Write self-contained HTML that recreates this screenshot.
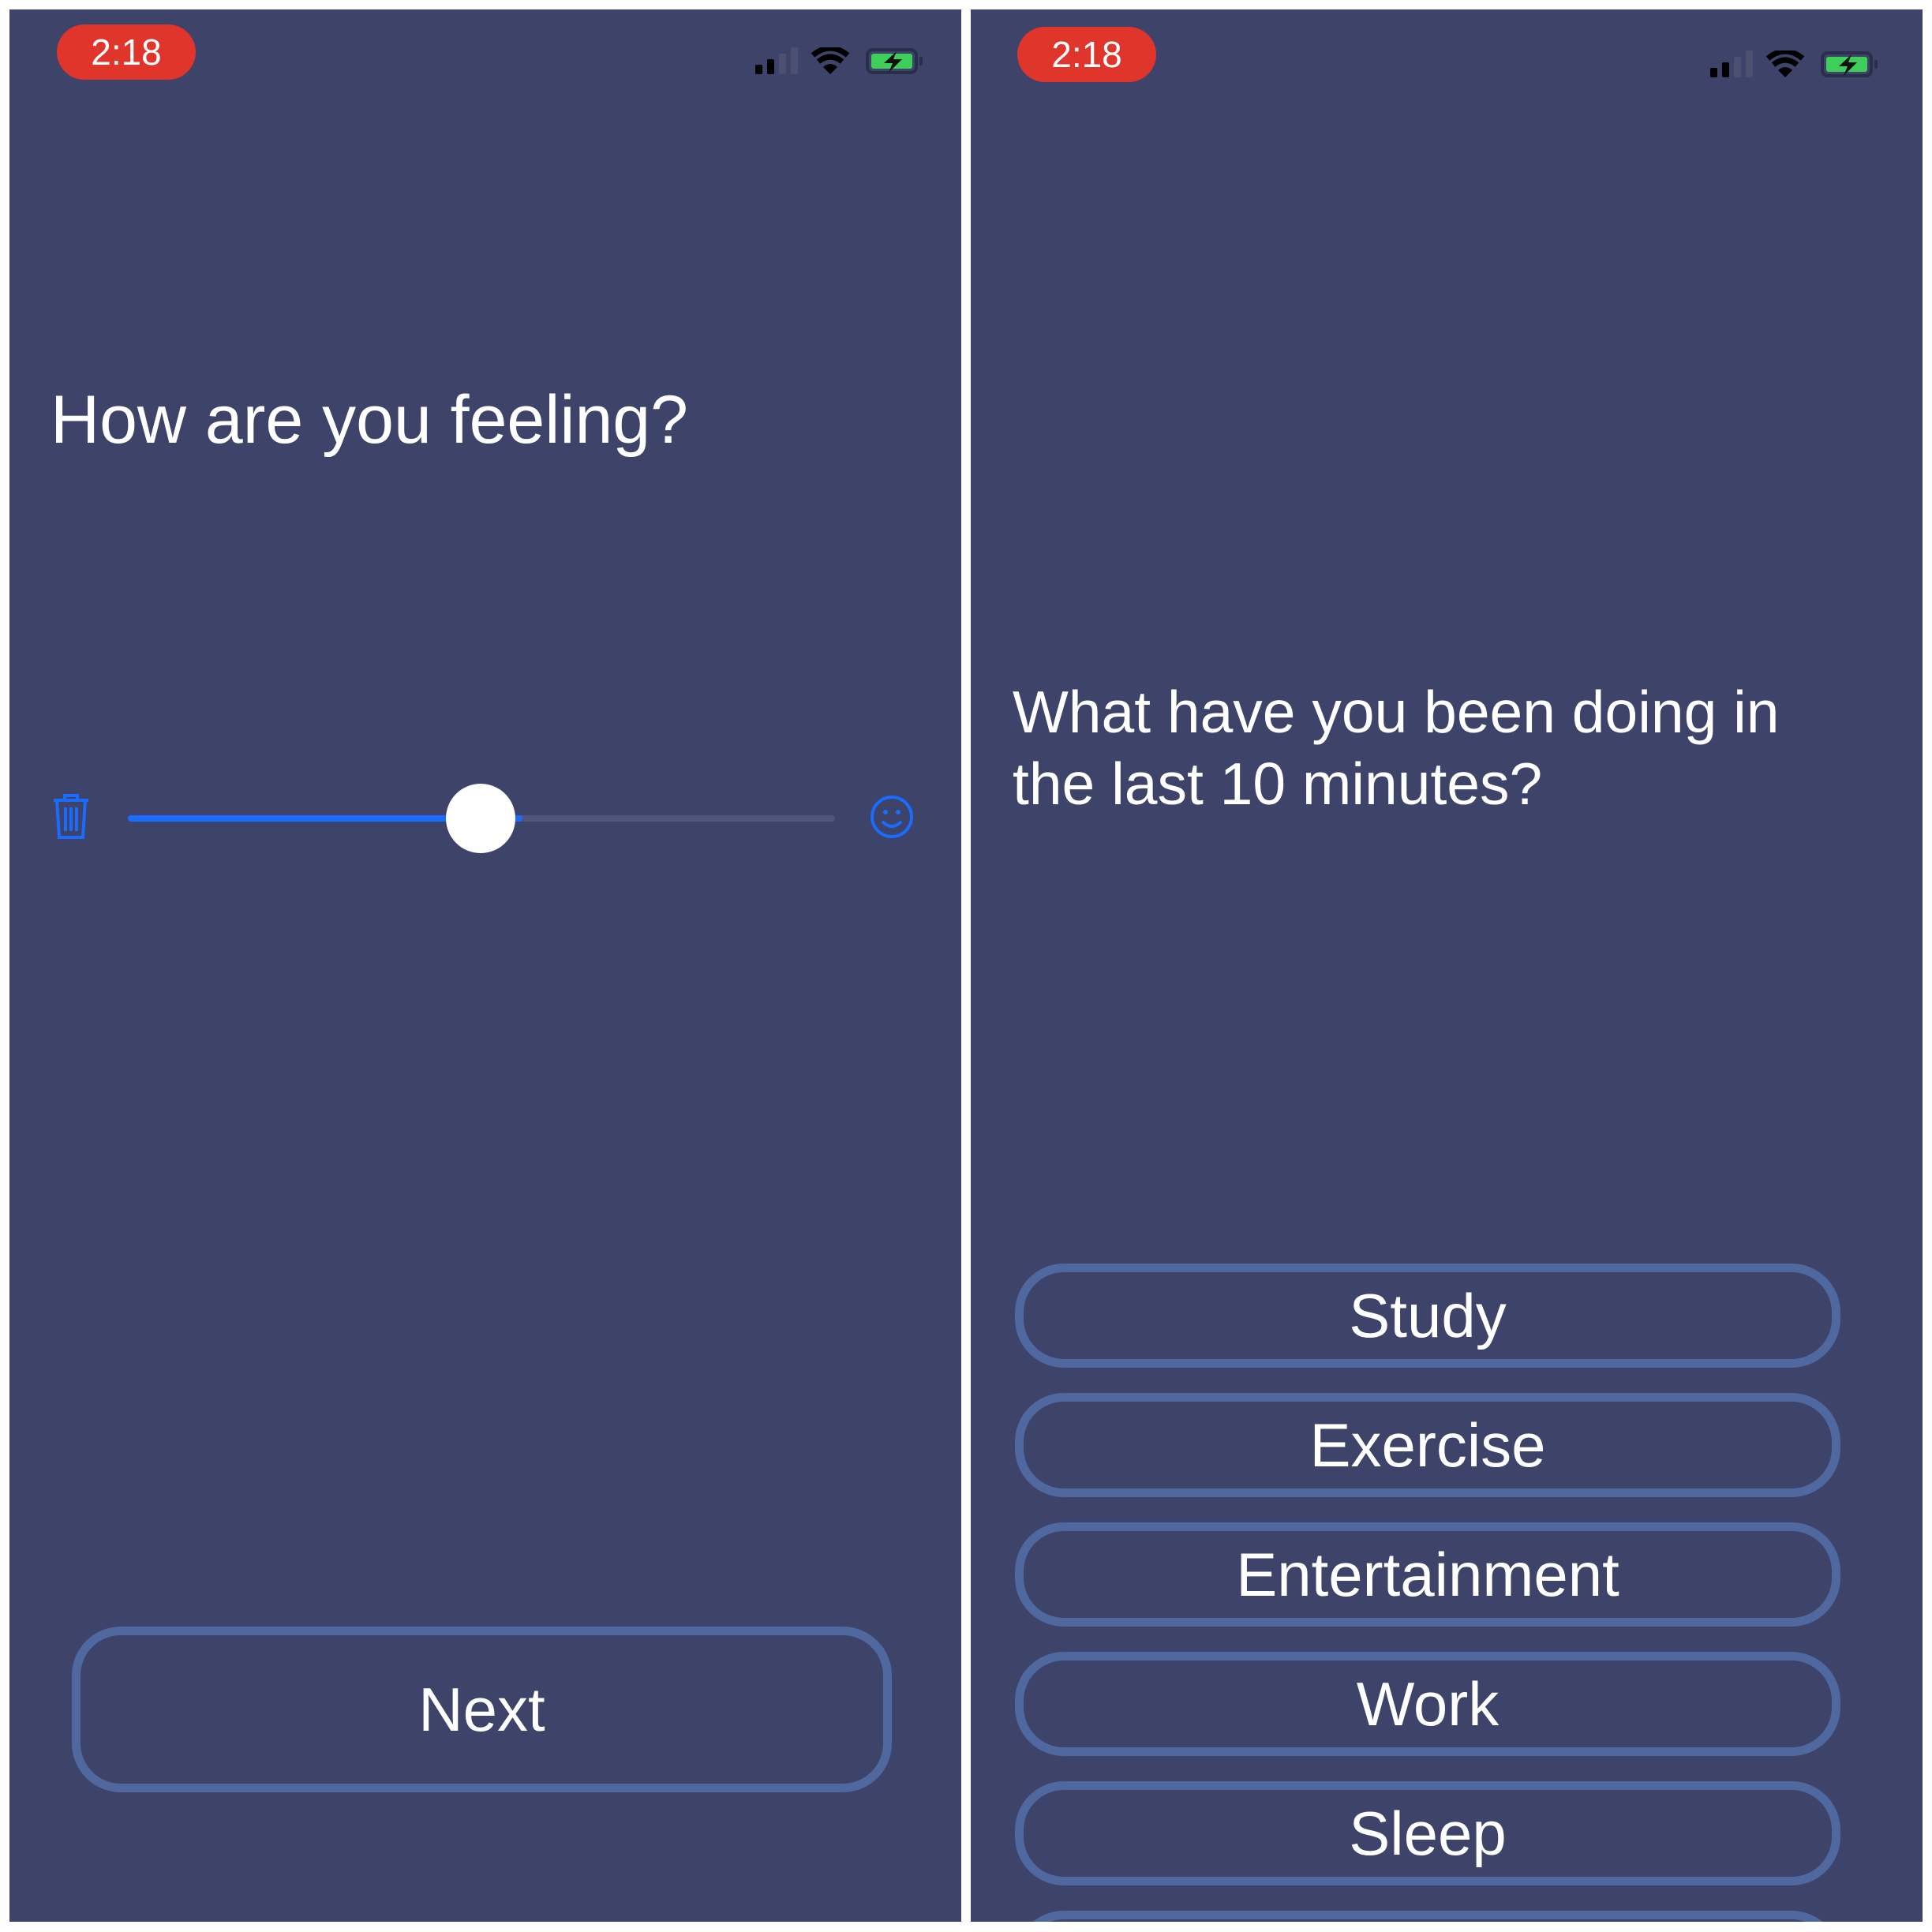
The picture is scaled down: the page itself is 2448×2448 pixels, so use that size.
<!DOCTYPE html>
<html><head><meta charset="utf-8"><style>
html,body{margin:0;padding:0;background:#fff;width:2448px;height:2448px;overflow:hidden;font-family:"Liberation Sans",sans-serif}
.p{position:absolute;top:12px;width:1206px;height:2423px;background:#3d4369;overflow:hidden}
.pill{position:absolute;background:#e0352b;color:#fff;border-radius:36px;font-size:46px;text-align:center;line-height:70px;height:70px;width:176px}
.st{position:absolute;top:48px;left:932px}
.btn{position:absolute;box-sizing:border-box;border:11px solid #5068a0;border-radius:62px;color:#fff;text-align:center;font-size:78px}
.t{position:absolute;color:#fff;font-size:88px;line-height:92px}
</style></head><body>
<div class="p" style="left:12px">
 <div class="pill" style="left:60px;top:19px">2:18</div>
 <svg class="st" width="240" height="40" viewBox="0 0 240 40">
  <rect x="13" y="22" width="9" height="12" rx="2" fill="#000"/>
  <rect x="28" y="15" width="9" height="19" rx="2" fill="#000"/>
  <rect x="43" y="8" width="9" height="26" rx="2" fill="#4c5172"/>
  <rect x="58" y="0" width="9" height="34" rx="2" fill="#4c5172"/>
  <path d="M86 10 Q108 -8 130 10" stroke="#000" stroke-width="7" fill="none"/>
  <path d="M93 18 Q108 6 123 18" stroke="#000" stroke-width="7" fill="none"/>
  <path d="M99 25 L108 34 L117 25 Q108 17 99 25Z" fill="#000"/>
  <rect x="155" y="3" width="62" height="29" rx="7" fill="none" stroke="#2a2e4a" stroke-width="4"/>
  <rect x="160" y="8" width="52" height="19" rx="3" fill="#3ecf5a"/>
  <path d="M192 5 L176 20 L187 20 L182 32 L199 15 L188 15Z" fill="#111"/>
  <rect x="221" y="12" width="4" height="11" rx="2" fill="#2a2e4a"/>
 </svg>
 <div class="t" style="left:52px;top:474px;font-size:86px">How are you feeling?</div>
 <svg style="position:absolute;left:50px;top:950px" width="1120" height="150">
  <rect x="100" y="71" width="896" height="8" rx="4" fill="#50557a"/>
  <rect x="100" y="71" width="500" height="8" rx="4" fill="#1a6bff"/>
  <circle cx="547" cy="75" r="44" fill="#fff"/>
  <g stroke="#1a6bff" stroke-width="4" fill="none">
   <path d="M6 52 H50 M20 52 V46 H36 V52 M10 52 L13 99 H43 L46 52 M21 61 V91 M28 61 V91 M35 61 V91"/>
   <circle cx="1068" cy="73" r="25"/>
   <path d="M1056 79 Q1068 91 1080 79"/>
  </g>
  <circle cx="1060" cy="67" r="3" fill="#1a6bff"/><circle cx="1076" cy="67" r="3" fill="#1a6bff"/>
 </svg>
 <div class="btn" style="left:79px;top:2049px;width:1039px;height:210px;line-height:188px">Next</div>
</div>
<div class="p" style="left:1230px">
 <div class="pill" style="left:59px;top:22px">2:18</div>
 <svg class="st" width="240" height="40" viewBox="0 0 240 40" style="top:52px;left:924px">
  <rect x="13" y="22" width="9" height="12" rx="2" fill="#000"/>
  <rect x="28" y="15" width="9" height="19" rx="2" fill="#000"/>
  <rect x="43" y="8" width="9" height="26" rx="2" fill="#4c5172"/>
  <rect x="58" y="0" width="9" height="34" rx="2" fill="#4c5172"/>
  <path d="M86 10 Q108 -8 130 10" stroke="#000" stroke-width="7" fill="none"/>
  <path d="M93 18 Q108 6 123 18" stroke="#000" stroke-width="7" fill="none"/>
  <path d="M99 25 L108 34 L117 25 Q108 17 99 25Z" fill="#000"/>
  <rect x="155" y="3" width="62" height="29" rx="7" fill="none" stroke="#2a2e4a" stroke-width="4"/>
  <rect x="160" y="8" width="52" height="19" rx="3" fill="#3ecf5a"/>
  <path d="M192 5 L176 20 L187 20 L182 32 L199 15 L188 15Z" fill="#111"/>
  <rect x="221" y="12" width="4" height="11" rx="2" fill="#2a2e4a"/>
 </svg>
 <div class="t" style="left:53px;top:845px;font-size:75px;line-height:91px">What have you been doing in<br>the last 10 minutes?</div>
 <div class="btn" style="left:56px;top:1589px;width:1046px;height:132px;line-height:110px">Study</div>
 <div class="btn" style="left:56px;top:1753px;width:1046px;height:132px;line-height:110px">Exercise</div>
 <div class="btn" style="left:56px;top:1917px;width:1046px;height:132px;line-height:110px">Entertainment</div>
 <div class="btn" style="left:56px;top:2081px;width:1046px;height:132px;line-height:110px">Work</div>
 <div class="btn" style="left:56px;top:2245px;width:1046px;height:132px;line-height:110px">Sleep</div>
 <div class="btn" style="left:56px;top:2409px;width:1046px;height:132px"></div>
</div>
</body></html>
